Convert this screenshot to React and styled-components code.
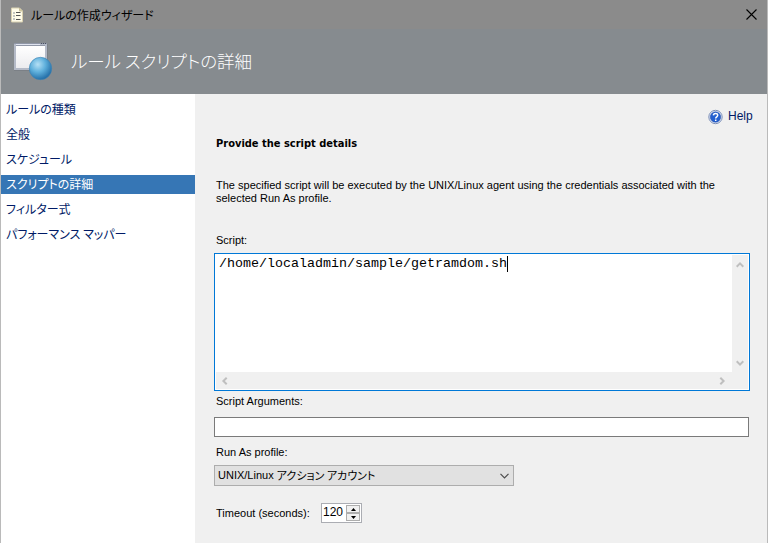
import React from 'react';
import styled, { createGlobalStyle, css } from 'styled-components';

const GlobalStyle = createGlobalStyle`
  * { box-sizing: border-box; }
  html, body { margin: 0; background: #fff; }
  body { font: 11px/13px "Liberation Sans", "Noto Sans CJK JP", sans-serif; color: #000; overflow: hidden; }
`;

const Window = styled.div`
  width: 768px;
  height: 543px;
  display: flex;
  flex-direction: column;
  background: #f0f0f0;
  border-left: 1px solid #bababa;
  border-right: 1px solid #bababa;
`;

/* A single line of text, drawn at its own horizontal proportion. */
const Line = styled.span`
  display: block;
  width: max-content;
  white-space: pre;
  transform-origin: 0 50%;
  letter-spacing: ${p => p.$track || 0}px;
  ${p => p.$stretch && css`transform: scaleX(${p.$stretch});`}
`;

const Japanese = styled(Line)`
  font-family: "Noto Sans CJK JP", sans-serif;
  font-feature-settings: "palt";
`;

const TitleBar = styled.div`
  flex: none;
  height: 29px;
  display: flex;
  align-items: center;
  padding: 0 10px 0 9px;
  background: #8b8b8b;
  svg { flex: none; }
`;

const TitleText = styled(Japanese)`
  margin-left: 7px;
  font-size: 12px;
  line-height: 18px;
`;

const CloseButton = styled.button`
  width: 11px;
  height: 11px;
  margin-left: auto;
  padding: 0;
  border: 0;
  background: none;
  display: flex;
`;

const Banner = styled.header`
  flex: none;
  height: 65px;
  display: flex;
  padding-left: 12px;
  background: #868b8f;
  color: #fff;
`;

const BannerIcon = styled.svg`
  flex: none;
  margin-top: 12px;
`;

const BannerText = styled(Japanese)`
  margin: 19px 0 0 16px;
  font-size: 17.5px;
  line-height: 26px;
  font-weight: 300;
`;

const Body = styled.div`
  flex: 1;
  min-height: 0;
  display: flex;
`;

const Nav = styled.nav`
  width: 194px;
  flex: none;
  display: flex;
  flex-direction: column;
  gap: 6px;
  padding-top: 6px;
  background: #fff;
`;

const NavItem = styled.div`
  height: 19px;
  padding-left: 5px;
  font-size: 12px;
  line-height: 17px;
  color: ${p => (p.$active ? '#fff' : '#001a66')};
  background: ${p => (p.$active ? '#3676b5' : 'transparent')};
`;

const Content = styled.main`
  flex: 1;
  display: flex;
  flex-direction: column;
  padding: 15px 17px 0 19px;
`;

const HelpLink = styled.div`
  align-self: flex-end;
  width: 42px;
  height: 16px;
  display: flex;
  gap: 5px;
  font-size: 12px;
  line-height: 15px;
  color: #001a66;
  svg { flex: none; }
`;

const Heading = styled.h1`
  margin: 12px 0 0 2px;
  height: 14px;
  font: bold 11px/14px "DejaVu Sans Condensed", "DejaVu Sans", sans-serif;
`;

const Description = styled.div`
  margin: 28px 0 0 2px;
  height: 26px;
`;

const Label = styled.div`
  margin: ${p => p.$top}px 0 0 2px;
  height: 13px;
`;

const ScriptBox = styled.div`
  flex: none;
  width: 536px;
  height: 138px;
  margin-top: 6px;
  padding: 1px;
  border: 1px solid #0078d7;
  background: #fff;
  display: grid;
  grid-template: 1fr 17px / 1fr 16px;
`;

const ScriptText = styled.div`
  display: flex;
  padding: 1px 0 0 3px;
  font: 13.33px/16px "Liberation Mono", monospace;
`;

const Caret = styled.span`
  width: 1px;
  height: 16px;
  background: #000;
`;

const VerticalBar = styled.div`
  background: #f0f0f0;
  display: flex;
  flex-direction: column;
  justify-content: space-between;
  align-items: center;
  padding: 6px 0 5px;
`;

const HorizontalBar = styled.div`
  grid-column: 1 / 3;
  background: #f0f0f0;
  display: flex;
  justify-content: space-between;
  align-items: center;
  padding: 0 22px 0 5px;
`;

const TextInput = styled.div`
  flex: none;
  width: 535px;
  height: 20px;
  margin-top: 9px;
  border: 1px solid #7a7a7a;
  background: #fff;
`;

const Select = styled.div`
  flex: none;
  width: 300px;
  height: 21px;
  margin-top: 6px;
  padding: 0 4px 0 3px;
  display: flex;
  align-items: center;
  border: 1px solid #adadad;
  background: #e1e1e1;
  svg { margin-left: auto; }
`;

const TimeoutRow = styled.div`
  margin: 17px 0 0 2px;
  display: flex;
  align-items: center;
`;

const TimeoutLabel = styled.div`
  width: 105px;
`;

const Spinner = styled.div`
  width: 41px;
  height: 20px;
  padding: 1px;
  display: flex;
  justify-content: space-between;
  border: 1px solid #abadb3;
  background: #fff;
  font-size: 12px;
  line-height: 15px;
`;

const SpinButtons = styled.div`
  width: 14px;
  display: flex;
  flex-direction: column;
`;

const SpinButton = styled.button`
  flex: 1;
  padding: 0;
  display: flex;
  align-items: center;
  justify-content: center;
  border: 1px solid #adadad;
  background: #f0f0f0;
`;

const DocumentIcon = () => (
  <svg width="14" height="16" viewBox="0 0 14 16">
    <path d="M1.5 1h8l3 3v11h-11z" fill="#fffce9" stroke="#d8d0b0" />
    <path d="M9.5 1v3h3" fill="#d4cba4" stroke="#c9c09b" />
    <path d="M3 6h2M3 9h2M3 12h2" stroke="#8a9197" />
    <path d="M6 5.5h4.500M6 8.500h4.500M6 12.500h4.500" stroke="#555" />
  </svg>
);

const RuleIcon = () => (
  <BannerIcon width="42" height="42" viewBox="0 0 42 42">
    <defs>
      <radialGradient id="ball" cx="38%" cy="32%" r="68%">
        <stop offset="0" stopColor="#b5e0f5" />
        <stop offset=".5" stopColor="#5fb0dc" />
        <stop offset="1" stopColor="#246fa8" />
      </radialGradient>
      <linearGradient id="pane" x2="0" y2="1">
        <stop offset="0" stopColor="#fff" />
        <stop offset="1" stopColor="#ececef" />
      </linearGradient>
    </defs>
    <path d="M1 3h34v27H1z" fill="#757a80" opacity=".6" />
    <path d="M1 2h33v27H1z" fill="#b4bac7" />
    <path d="M3 5h29v22H3z" fill="url(#pane)" />
    <path d="M1 2.500h33M3 4.500h29" stroke="#9097a7" />
    <path d="M3 3.500h24" stroke="#dfe3ee" />
    <path d="M28 2.500h1M30 2.500h1M32 2.500h1" stroke="#4b5162" />
    <circle cx="27.500" cy="27.500" r="11.200" fill="url(#ball)" stroke="#3f83b2" strokeWidth=".6" />
  </BannerIcon>
);

const HelpIcon = () => (
  <svg width="15" height="16" viewBox="0 0 15 16">
    <circle cx="7.500" cy="8" r="6.700" fill="#e6edfa" stroke="#7084b0" strokeWidth=".9" />
    <circle cx="7.500" cy="8" r="5.200" fill="#2460d0" stroke="#2048a0" strokeWidth=".5" />
    <path d="M5.400 6.400c.1-2.700 4.400-2.600 4.300-.1 0 1.500-2 1.500-2 3.100M7.700 10.400v1.500" fill="none" stroke="#fff" strokeWidth="1.500" />
  </svg>
);

const CloseIcon = () => (
  <svg width="11" height="11" viewBox="0 0 11 11">
    <path d="M.5.5l10 10M10.500.5l-10 10" stroke="#000" strokeWidth="1.100" />
  </svg>
);

const turns = { up: 0, right: 90, down: 180, left: 270 };

const ScrollArrow = ({ direction }) => (
  <svg width="8" height="8" viewBox="0 0 8 8">
    <path d="M.7 5.700L4 2.400l3.300 3.300" transform={`rotate(${turns[direction]} 4 4)`} fill="none" stroke="#bfbfbf" strokeWidth="2" />
  </svg>
);

const DropArrow = () => (
  <svg width="9" height="6" viewBox="0 0 9 6">
    <path d="M.5.8l4 4 4-4" fill="none" stroke="#4c4c4c" strokeWidth="1.200" />
  </svg>
);

const SpinArrow = ({ down }) => (
  <svg width="5" height="3" viewBox="0 0 5 3">
    <path d={down ? 'M0 0h5L2.500 3z' : 'M0 3h5L2.500 0z'} />
  </svg>
);

const steps = [
  { name: 'ルールの種類', stretch: 1 },
  { name: '全般', stretch: 1 },
  { name: 'スケジュール', stretch: 1 },
  { name: 'スクリプトの詳細', stretch: 1, active: true },
  { name: 'フィルター式', stretch: 1 },
  { name: 'パフォーマンス マッパー', stretch: 1 },
];

export default function App() {
  return (
    <>
      <GlobalStyle />
      <Window>
        <TitleBar>
          <DocumentIcon />
          <TitleText>ルールの作成ウィザード</TitleText>
          <CloseButton aria-label="Close"><CloseIcon /></CloseButton>
        </TitleBar>
        <Banner>
          <RuleIcon />
          <BannerText>ルール スクリプトの詳細</BannerText>
        </Banner>
        <Body>
          <Nav>
            {steps.map(s => (
              <NavItem key={s.name} $active={s.active}>
                <Japanese $stretch={s.stretch}>{s.name}</Japanese>
              </NavItem>
            ))}
          </Nav>
          <Content>
            <HelpLink><HelpIcon /><Line>Help</Line></HelpLink>
            <Heading><Line>Provide the script details</Line></Heading>
            <Description>
              <Line>The specified script will be executed by the UNIX/Linux agent using the credentials associated with the</Line>
              <Line>selected Run As profile.</Line>
            </Description>
            <Label $top={29}><Line>Script:</Line></Label>
            <ScriptBox>
              <ScriptText><span>/home/localadmin/sample/getramdom.sh</span><Caret /></ScriptText>
              <VerticalBar><ScrollArrow direction="up" /><ScrollArrow direction="down" /></VerticalBar>
              <HorizontalBar><ScrollArrow direction="left" /><ScrollArrow direction="right" /></HorizontalBar>
            </ScriptBox>
            <Label $top={4}><Line>Script Arguments:</Line></Label>
            <TextInput />
            <Label $top={9}><Line>Run As profile:</Line></Label>
            <Select>
              <Line>UNIX/Linux </Line>
              <Japanese>アクション アカウント</Japanese>
              <DropArrow />
            </Select>
            <TimeoutRow>
              <TimeoutLabel><Line>Timeout (seconds):</Line></TimeoutLabel>
              <Spinner>
                <Line>120</Line>
                <SpinButtons>
                  <SpinButton aria-label="Increase"><SpinArrow /></SpinButton>
                  <SpinButton aria-label="Decrease"><SpinArrow down /></SpinButton>
                </SpinButtons>
              </Spinner>
            </TimeoutRow>
          </Content>
        </Body>
      </Window>
    </>
  );
}
